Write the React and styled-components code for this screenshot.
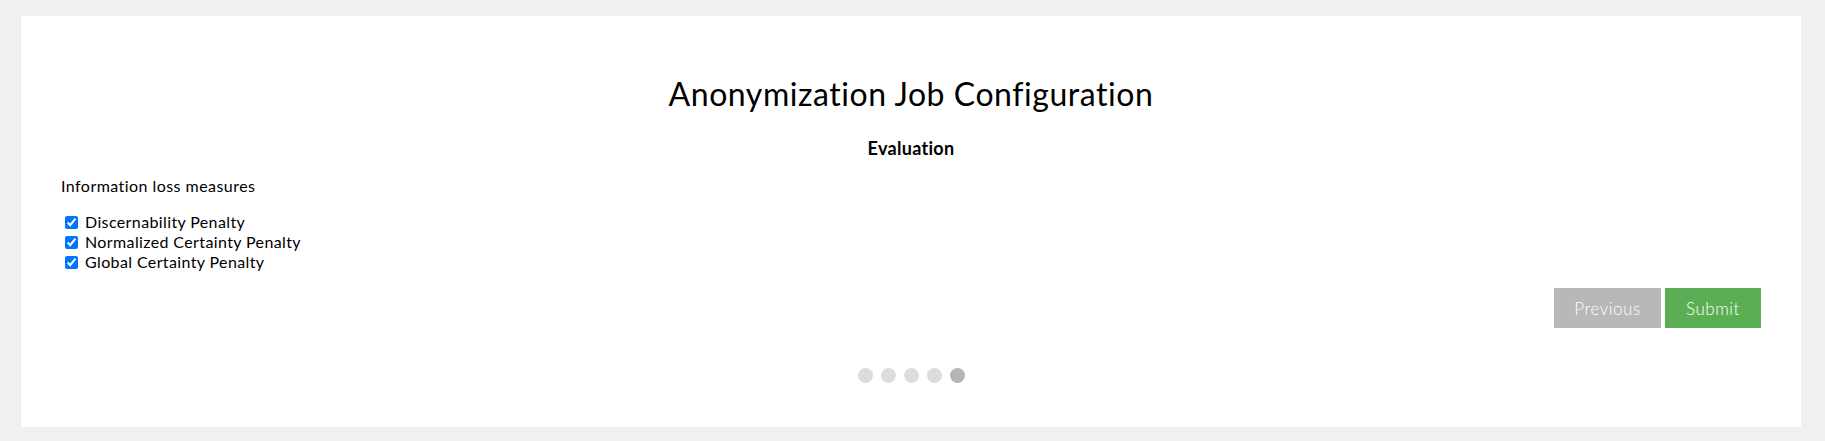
import React from "react";
import styled, { createGlobalStyle } from "styled-components";

const GlobalStyle = createGlobalStyle`
  body {
    margin: 0;
    background: #f0f0f0;
    font-family: Lato, "Open Sans", sans-serif;
    color: #000;
  }
`;

const Page = styled.div`
  padding: 16px 24px 14px 21px;
`;

const Card = styled.form`
  background: #fff;
  width: 1780px;
  box-sizing: border-box;
  padding: 58px 40px 44px;
`;

const Title = styled.h2`
  margin: 0;
  font-size: 32px;
  line-height: 40px;
  font-weight: 400;
  letter-spacing: 0.55px;
  text-align: center;
`;

const SubTitle = styled.h3`
  margin: 22px 0 0;
  font-size: 18px;
  line-height: 24px;
  font-weight: 700;
  letter-spacing: 0.3px;
  text-align: center;
`;

const Label = styled.div`
  margin-top: 16px;
  font-size: 16px;
  line-height: 20px;
  letter-spacing: 0.45px;
`;

const CheckList = styled.div`
  margin-top: 16px;
  display: flex;
  flex-direction: column;
`;

const CheckRow = styled.label`
  display: flex;
  align-items: center;
  font-size: 16px;
  line-height: 20px;
  height: 20px;
  letter-spacing: 0.38px;

  input {
    width: 13px;
    height: 13px;
    margin: 0 7px 0 4px;
  }
`;

const Actions = styled.div`
  margin-top: 16px;
  display: flex;
  justify-content: flex-end;
  gap: 4px;
`;

const Button = styled.button`
  width: ${(p) => p.$w}px;
  height: 40px;
  border: 0;
  border-radius: 0;
  background: ${(p) => (p.$primary ? "#5bae54" : "#b8b8b8")};
  color: #fff;
  font-family: inherit;
  font-size: 17px;
  font-weight: 300;
  letter-spacing: 0.5px;
  cursor: pointer;
`;

const Progress = styled.div`
  margin-top: 40px;
  display: flex;
  justify-content: center;
  gap: 8px;
`;

const Dot = styled.span`
  width: 15px;
  height: 15px;
  border-radius: 50%;
  background: ${(p) => (p.$active ? "#b5b5b5" : "#dcdcdc")};
`;

const measures = [
  "Discernability Penalty",
  "Normalized Certainty Penalty",
  "Global Certainty Penalty",
];

export default function App() {
  return (
    <>
      <GlobalStyle />
      <Page>
        <Card onSubmit={(e) => e.preventDefault()}>
          <Title>Anonymization Job Configuration</Title>
          <SubTitle>Evaluation</SubTitle>
          <Label>Information loss measures</Label>
          <CheckList>
            {measures.map((m) => (
              <CheckRow key={m}>
                <input type="checkbox" defaultChecked />
                {m}
              </CheckRow>
            ))}
          </CheckList>
          <Actions>
            <Button type="button" $w={107}>
              Previous
            </Button>
            <Button type="submit" $primary $w={96}>
              Submit
            </Button>
          </Actions>
          <Progress>
            {[0, 1, 2, 3, 4].map((i) => (
              <Dot key={i} $active={i === 4} />
            ))}
          </Progress>
        </Card>
      </Page>
    </>
  );
}
